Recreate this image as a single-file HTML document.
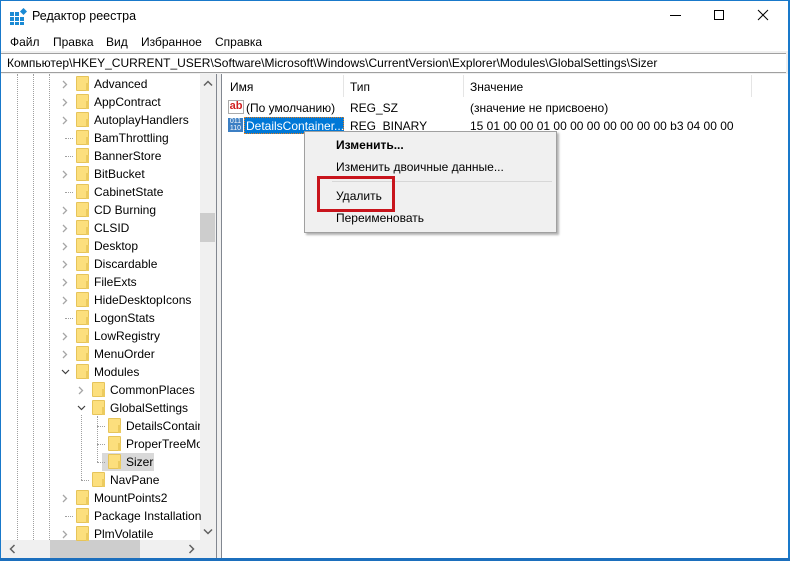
<!DOCTYPE html>
<html><head><meta charset="utf-8"><style>
*{margin:0;padding:0;box-sizing:border-box}
body{width:790px;height:561px;background:#fff;font-family:"Liberation Sans",sans-serif;font-size:12px;color:#000;position:relative;overflow:hidden}
.a{position:absolute;white-space:nowrap}
.fold{position:absolute;width:13px;height:15px;background:#fcdf7d;border:1px solid #e6c45a;border-radius:1px}
.fold:after{content:"";position:absolute;right:-1px;bottom:-1px;width:3px;height:8px;background:#eccb5f}
.dv{position:absolute;width:1px;border-left:1px dotted #a0a0a0}
.dh{position:absolute;height:1px;border-top:1px dotted #a0a0a0}
</style></head><body>
<div class="a" style="left:0;top:0;width:1px;height:561px;background:#1979ca"></div>
<div class="a" style="right:0;top:0;width:2px;height:561px;background:#1979ca"></div>
<div class="a" style="left:0;top:0;width:790px;height:1px;background:#1979ca"></div>
<div class="a" style="left:0;bottom:0;width:790px;height:3px;background:#1c6fbd"></div>
<svg class="a" style="left:10px;top:8px" width="17" height="17" viewBox="0 0 17 17"><g fill="#1a8ad4"><rect x="0" y="4" width="4" height="4"/><rect x="5" y="4" width="4" height="4"/><rect x="0" y="9" width="4" height="4"/><rect x="5" y="9" width="4" height="4"/><rect x="10" y="9" width="4" height="4"/><rect x="0" y="14" width="4" height="3"/><rect x="5" y="14" width="4" height="3"/><rect x="10" y="14" width="4" height="3"/><rect x="11" y="1" width="5" height="5" transform="rotate(45 13.5 3.5)"/></g></svg>
<div class="a" style="left:32px;top:9px;font-size:12.5px">Редактор реестра</div>
<div class="a" style="left:670px;top:15px;width:11px;height:1px;background:#000"></div>
<div class="a" style="left:714px;top:10px;width:10px;height:10px;border:1px solid #000"></div>
<svg class="a" style="left:757px;top:9px" width="12" height="12"><path d="M1 1L11 11M11 1L1 11" stroke="#000" stroke-width="1"/></svg>
<div class="a" style="left:10px;top:35px">Файл</div>
<div class="a" style="left:53px;top:35px">Правка</div>
<div class="a" style="left:106px;top:35px">Вид</div>
<div class="a" style="left:141px;top:35px">Избранное</div>
<div class="a" style="left:215px;top:35px">Справка</div>
<div class="a" style="left:1px;top:51px;width:787px;height:23px;background:#f0f0f0"></div>
<div class="a" style="left:1px;top:53px;width:785px;height:20px;background:#fff;border-top:1px solid #a0a0a0;border-bottom:1px solid #a0a0a0"></div>
<div class="a" style="left:7px;top:56px">Компьютер\HKEY_CURRENT_USER\Software\Microsoft\Windows\CurrentVersion\Explorer\Modules\GlobalSettings\Sizer</div>
<div class="a" style="left:216px;top:74px;width:6px;height:484px;background:#f0f0f0;border-left:1px solid #828790;border-right:1px solid #828790"></div>
<div class="a" style="left:1px;top:540px;width:215px;height:18px;background:#f0f0f0"></div>
<div class="a" style="left:200px;top:74px;width:16px;height:466px;background:#f0f0f0"></div>
<div class="a" style="left:200px;top:213px;width:15px;height:29px;background:#cdcdcd"></div>
<svg class="a" style="left:203px;top:80px" width="10" height="7"><path d="M1 5.5L5 1.5L9 5.5" stroke="#606060" stroke-width="1.5" fill="none"/></svg>
<svg class="a" style="left:203px;top:528px" width="10" height="7"><path d="M1 1.5L5 5.5L9 1.5" stroke="#606060" stroke-width="1.5" fill="none"/></svg>
<div class="a" style="left:50px;top:540px;width:90px;height:18px;background:#cdcdcd"></div>
<svg class="a" style="left:9px;top:544px" width="7" height="10"><path d="M5.5 1L1.5 5L5.5 9" stroke="#606060" stroke-width="1.5" fill="none"/></svg>
<svg class="a" style="left:188px;top:544px" width="7" height="10"><path d="M1.5 1L5.5 5L1.5 9" stroke="#606060" stroke-width="1.5" fill="none"/></svg>
<div class="dv" style="left:17px;top:74px;height:466px"></div>
<div class="dv" style="left:33px;top:74px;height:466px"></div>
<div class="dv" style="left:49px;top:74px;height:466px"></div>
<div class="dv" style="left:81px;top:415px;height:65px"></div>
<div class="dv" style="left:97px;top:416px;height:46px"></div>
<div class="a" style="left:102px;top:453px;width:52px;height:18px;background:#d9d9d9"></div>
<div id="tree"></div>
<script>
var rows=[["Advanced",1,1],["AppContract",1,1],["AutoplayHandlers",1,1],["BamThrottling",1,0],["BannerStore",1,0],["BitBucket",1,1],["CabinetState",1,0],["CD Burning",1,1],["CLSID",1,1],["Desktop",1,1],["Discardable",1,1],["FileExts",1,1],["HideDesktopIcons",1,1],["LogonStats",1,0],["LowRegistry",1,1],["MenuOrder",1,1],["Modules",1,2],["CommonPlaces",2,1],["GlobalSettings",2,2],["DetailsContain",3,0],["ProperTreeMo",3,0],["Sizer",3,0],["NavPane",2,0],["MountPoints2",1,1],["Package Installation",1,0],["PlmVolatile",1,1]];
var h="";rows.forEach(function(r,i){var y=84+i*18;var fx=76+(r[1]-1)*16;
if(r[2]==1)h+='<svg class="a" style="left:'+(fx-14)+'px;top:'+(y-4)+'px" width="6" height="9"><path d="M1 1L4.5 4.5L1 8" stroke="#a6a6a6" stroke-width="1.3" fill="none"/></svg>';
else if(r[2]==2)h+='<svg class="a" style="left:'+(fx-15)+'px;top:'+(y-3)+'px" width="9" height="6"><path d="M1 1L4.5 4.5L8 1" stroke="#404040" stroke-width="1.2" fill="none"/></svg>';
else h+='<div class="dh" style="left:'+(fx-11)+'px;top:'+y+'px;width:8px"></div>';
h+='<div class="fold" style="left:'+fx+'px;top:'+(y-8)+'px"></div>';
h+='<div class="a" style="left:'+(fx+18)+'px;top:'+(y-7)+'px;'+(r[1]==3?'width:'+(200-fx-18)+'px;overflow:hidden':'')+'">'+r[0]+'</div>';});
document.getElementById("tree").innerHTML=h;
</script>
<div class="a" style="left:343px;top:75px;width:1px;height:22px;background:#e5e5e5"></div>
<div class="a" style="left:463px;top:75px;width:1px;height:22px;background:#e5e5e5"></div>
<div class="a" style="left:751px;top:75px;width:1px;height:22px;background:#e5e5e5"></div>
<div class="a" style="left:230px;top:80px">Имя</div>
<div class="a" style="left:350px;top:80px">Тип</div>
<div class="a" style="left:470px;top:80px">Значение</div>
<div class="a" style="left:228px;top:100px;width:16px;height:14px;border:1px solid #aaa;background:#fff;color:#d02020;font-weight:bold;font-size:11px;line-height:11px;text-align:center">ab</div>
<div class="a" style="left:246px;top:101px">(По умолчанию)</div>
<div class="a" style="left:350px;top:101px">REG_SZ</div>
<div class="a" style="left:470px;top:101px">(значение не присвоено)</div>
<div class="a" style="left:228px;top:118px;width:15px;height:14px;background:#3c7fc4;color:#fff;font-size:7px;line-height:7px;text-align:center">011<br>110</div>
<div class="a" style="left:244px;top:117px;width:100px;height:17px;background:#0078d7;border:1px dotted #e08020"></div>
<div class="a" style="left:246px;top:119px;color:#fff">DetailsContainer...</div>
<div class="a" style="left:350px;top:119px">REG_BINARY</div>
<div class="a" style="left:470px;top:119px">15 01 00 00 01 00 00 00 00 00 00 00 b3 04 00 00</div>
<div class="a" style="left:304px;top:131px;width:253px;height:102px;background:#f0f0f0;border:1px solid #a0a0a0;box-shadow:2px 2px 2px rgba(0,0,0,.3)"></div>
<div class="a" style="left:336px;top:138px;font-weight:bold">Изменить...</div>
<div class="a" style="left:336px;top:160px">Изменить двоичные данные...</div>
<div class="a" style="left:332px;top:181px;width:220px;height:1px;background:#d7d7d7"></div>
<div class="a" style="left:336px;top:189px">Удалить</div>
<div class="a" style="left:336px;top:211px">Переименовать</div>
<div class="a" style="left:317px;top:176px;width:78px;height:36px;border:3px solid #c8141c"></div>
</body></html>
